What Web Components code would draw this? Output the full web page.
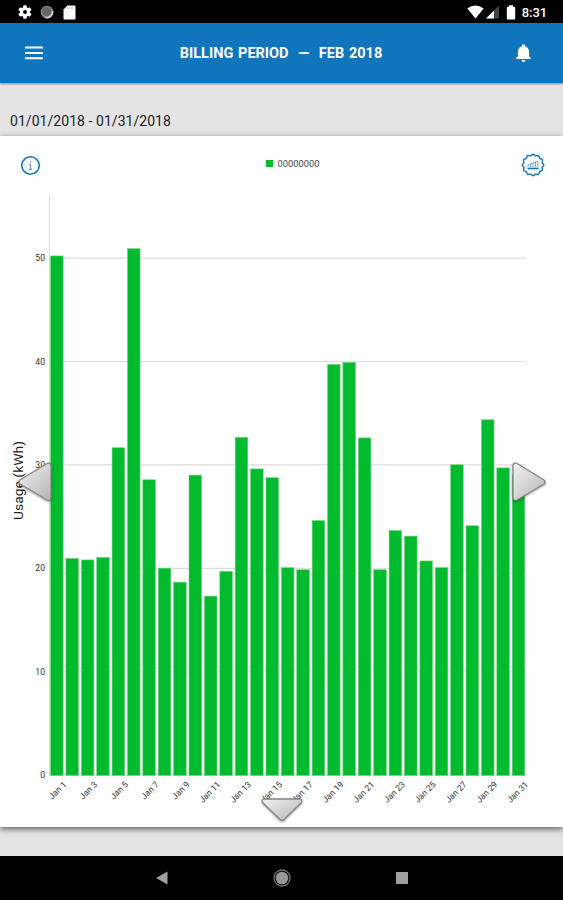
<!DOCTYPE html>
<html lang="en">
<head>
<meta charset="utf-8">
<title>Billing period</title>
<style>
    html, body {
        margin: 0;
        height: 100%;
    }

    body {
        --color-primary: #0f75bc;
        --color-bar: #00bb2d;
        font-family: Roboto, "Liberation Sans", sans-serif;
        background: #000;
        overflow: hidden;
    }
</style>
</head>
<body>
<usage-app></usage-app>

<script>
class BaseComponent extends HTMLElement {
    constructor() {
        super();
        this.template = document.createElement('template');
        this.template.innerHTML = this.getTemplate();
        this.attachShadow({mode: 'open'}).appendChild(this.template.content.cloneNode(true));
    }
}

class StatusBar extends BaseComponent {
    getTemplate() {
        return `
            <style>
                :host {
                    display: flex;
                    align-items: center;
                    justify-content: space-between;
                    box-sizing: border-box;
                    height: 23px;
                    padding: 1px 16px 0 17px;
                    background: #000;
                    color: #fff;
                }
                div { display: flex; align-items: center; }
                svg { display: block; }
                .left { gap: 7px; }
                .time { font-size: 13px; font-weight: 500; margin-left: 6px; letter-spacing: -.1px; }
            </style>
            <div class="left">
                <svg width="16" height="16" viewBox="0 0 24 24" fill="#fff"><path d="M19.4 13a7.500 7.500 0 0 0 0-2l2.100-1.600a.5.5 0 0 0 .1-.7l-2-3.400a.5.5 0 0 0-.6-.2l-2.500 1a7.300 7.300 0 0 0-1.700-1l-.4-2.600a.5.5 0 0 0-.5-.5h-4a.5.5 0 0 0-.5.5L9 5.100a7.700 7.700 0 0 0-1.700 1l-2.500-1a.5.5 0 0 0-.6.2l-2 3.400a.5.5 0 0 0 .1.700L4.500 11a7.900 7.900 0 0 0 0 2l-2.200 1.600a.5.5 0 0 0-.1.700l2 3.400a.5.5 0 0 0 .6.200l2.500-1a7.300 7.300 0 0 0 1.700 1l.4 2.600a.5.5 0 0 0 .5.500h4a.5.5 0 0 0 .5-.5l.4-2.600a7.700 7.700 0 0 0 1.700-1l2.500 1a.5.5 0 0 0 .6-.2l2-3.400a.5.5 0 0 0-.1-.7zM12 15a3 3 0 1 1 0-6 3 3 0 0 1 0 6z"/></svg>
                <svg width="14" height="14" viewBox="0 0 14 14"><circle cx="7" cy="7" r="6.300" fill="#888"/><circle cx="6.500" cy="6.400" r="4.600" fill="#666"/><path d="M12.500 6a5.600 5.600 0 0 1-7 6.400" fill="none" stroke="#ddd" stroke-width="1.500"/></svg>
                <svg style="margin-left:2px" width="13" height="15" viewBox="0 0 13 15"><path d="M4.500.5h7q1 0 1 1v12q0 1-1 1h-10q-1 0-1-1v-9z" fill="#fff"/><path d="M4.700 2v2M6.900 2v2M9.100 2v2" stroke="#bbb"/></svg>
            </div>
            <div>
                <svg width="17" height="14" viewBox="0 0 17 14"><path d="M.3 3.400Q8.500-2.200 16.700 3.400L8.500 13.500z" fill="#fff"/></svg>
                <svg style="margin-left:1px" width="15" height="14" viewBox="0 0 15 14"><path d="M1 13.500L14 .5v13z" fill="#444"/><path d="M1 13.500L9 5.500v8z" fill="#fff"/></svg>
                <svg style="margin-left:6px" width="10" height="15" viewBox="0 0 10 15"><path d="M3 .3h4v1.500h1.200q1 0 1 1v10.700q0 1-1 1H1.800q-1 0-1-1V2.800q0-1 1-1H3z" fill="#fff"/></svg>
                <span class="time">8:31</span>
            </div>
        `;
    }
}

class AppHeader extends BaseComponent {
    getTemplate() {
        return `
            <style>
                :host {
                    display: flex;
                    align-items: center;
                    justify-content: space-between;
                    box-sizing: border-box;
                    height: 60px;
                    padding: 0 32px 0 25px;
                    background: var(--color-primary);
                    color: #fff;
                    box-shadow: 0 1px 2px rgba(0, 0, 0, .4);
                    position: relative;
                }
                h1 {
                    margin: 1px 0 0 3px;
                    font-size: 14.500px;
                    font-weight: 700;
                    white-space: pre;
                    word-spacing: 1.200px;
                }
                svg { display: block; }
            </style>
            <svg width="18" height="14" viewBox="0 0 18 14"><path d="M0 1.600h18M0 6.900h18M0 12.200h18" stroke="#fff" stroke-width="2"/></svg>
            <h1><slot></slot></h1>
            <svg width="15" height="18" viewBox="0 0 16 19"><path d="M8 19a2 2 0 0 0 2-2H6a2 2 0 0 0 2 2zM14 13V8.300C14 5.400 12.200 3 9.500 2.300v-.6a1.500 1.500 0 0 0-3 0v.6C3.800 3 2 5.400 2 8.300V13L.3 14.800v1h15.400v-1z" fill="#fff"/></svg>
        `;
    }
}

class UsageChart extends BaseComponent {
    getTemplate() {
        const values = [
            50.25, 21, 20.85, 21.1, 31.7, 50.95, 28.6, 20.05, 18.7, 29.05, 17.35,
            19.75, 32.7, 29.65, 28.8, 20.1, 19.9, 24.65, 39.75, 39.95, 32.65,
            19.9, 23.7, 23.15, 20.75, 20.1, 30.05, 24.15, 34.4, 29.75, 29.1,
        ];
        const left = 49.3;
        const base = 587.5;
        const unit = 10.34;
        const step = 15.39;

        const grid = [0, 10, 20, 30, 40, 50].map((v) => {
            const y = base - 0.4 - v * unit;
            return `<path class="grid" d="M49 ${y}H526"/><text x="45" y="${y + 3}" text-anchor="end">${v}</text>`;
        }).join('');

        const bars = values.map((v, i) => `
            <rect x="${left + 1.2 + i * step}" y="${base - v * unit}" width="12.600" height="${v * unit}"/>`
        ).join('');

        const days = values.map((v, i) => {
            if (i % 2) {
                return '';
            }
            const x = left + 17.8 + i * step;
            return `<text transform="translate(${x} ${base + 9.5}) rotate(-45)" text-anchor="end">Jan ${i + 1}</text>`;
        }).join('');

        return `
            <style>
                :host { display: block; }
                svg { display: block; }
                rect { fill: var(--color-bar); stroke: #74d67c; stroke-width: .6; }
                text { font-size: 8.600px; fill: #333; }
                .grid { stroke: #dcdcdc; stroke-width: 1.200; }
                .title { font-size: 13.200px; fill: #222; }
            </style>
            <svg width="563" height="632" viewBox="0 0 563 632">
                <path class="grid" d="M49.500 8V588"/>
                ${grid}
                ${bars}
                ${days}
                <text class="title" transform="translate(22.500 332) rotate(-90)" textLength="79" lengthAdjust="spacingAndGlyphs">Usage (kWh)</text>
            </svg>
        `;
    }
}

class PagerArrow extends BaseComponent {
    getTemplate() {
        return `
            <style>
                :host { display: block; position: absolute; }
                :host([side="left"]) { left: 17px; top: 325px; }
                :host([side="right"]) { left: 511px; top: 325px; }
                :host([side="down"]) { left: 261px; top: 661px; }
                svg { display: none; filter: drop-shadow(0 1px 1px rgba(0, 0, 0, .35)); }
                :host([side="left"]) .left,
                :host([side="right"]) .right,
                :host([side="down"]) .down { display: block; }
                path { fill: url(#shade); stroke: #858585; stroke-width: 1.300; stroke-linejoin: round; }
            </style>
            <svg width="0" height="0" style="display:block;position:absolute">
                <linearGradient id="shade" x1="0" y1="0" x2="1" y2="1">
                    <stop offset="0" stop-color="#f2f2f2"/>
                    <stop offset="1" stop-color="#b4b4b4"/>
                </linearGradient>
            </svg>
            <svg class="left" width="36" height="42" viewBox="0 0 36 42"><path d="M2.500 21Q1.500 20 3 19L30 2.500Q34 1 34 5V36Q34 40.500 30 39L3 23Q1.500 22 2.500 21z"/></svg>
            <svg class="right" width="36" height="42" viewBox="0 0 36 42"><path d="M33.500 21Q34.500 20 33 19L6 2.500Q2 1 2 5V36Q2 40.500 6 39L33 23Q34.500 22 33.500 21z"/></svg>
            <svg class="down" width="42" height="27" viewBox="0 0 42 27"><path d="M2.500 2H39.500Q42 3 40 6L23 22.500Q21 24.500 19 22.500L2 6Q0 3 2.500 2z"/></svg>
        `;
    }
}

class ChartCard extends BaseComponent {
    getTemplate() {
        return `
            <style>
                :host {
                    display: block;
                    position: relative;
                    height: 691px;
                    background: #fff;
                    box-shadow: 0 2px 6px rgba(0, 0, 0, .6);
                }
                .tools {
                    display: flex;
                    align-items: center;
                    justify-content: space-between;
                    height: 52px;
                    padding: 6px 18px 0 20px;
                    box-sizing: border-box;
                }
                .legend {
                    display: flex;
                    align-items: center;
                    gap: 5px;
                    margin: 0 0 3px 23px;
                    font-size: 9.300px;
                    color: #444;
                }
                .legend i { width: 7px; height: 7px; background: var(--color-bar); }
                .tools svg { display: block; fill: none; stroke: var(--color-primary); }
            </style>
            <div class="tools">
                <svg width="21" height="21" viewBox="0 0 21 21">
                    <circle cx="10.500" cy="10.500" r="8.700" stroke-width="1.600"/>
                    <path d="M10.500 6v1.700M9 9.700h1.500v4.500M8.800 14.300h3.400" stroke-width="1.200" stroke="#6a9bd0"/>
                </svg>
                <div class="legend"><i></i><span><slot name="legend"></slot></span></div>
                <svg width="24" height="24" viewBox="-12 -12 24 24">
                    <path id="badge" stroke-width="1.400"/>
                    <path d="M-5.500 3.500H5.500" stroke-width="1.600"/>
                    <path d="M-5 2.300V0L4.800-3.800V2.300M-2.500 2.300V-1M0 2.300V-2M2.500 2.300V-3" stroke-width=".9" opacity=".65"/>
                </svg>
            </div>
            <slot></slot>
        `;
    }

    connectedCallback() {
        // scalloped outline of the badge, 12 lobes
        const points = [];
        for (let i = 0; i < 144; i++) {
            const a = i * Math.PI / 72;
            const r = 10.1 + 0.7 * Math.cos(a * 12);
            points.push(`${(r * Math.cos(a)).toFixed(2)} ${(r * Math.sin(a)).toFixed(2)}`);
        }
        this.shadowRoot.querySelector('#badge').setAttribute('d', `M${points.join('L')}z`);
    }
}

class NavBar extends BaseComponent {
    getTemplate() {
        return `
            <style>
                :host {
                    display: flex;
                    align-items: center;
                    justify-content: center;
                    gap: 101px;
                    height: 44px;
                    background: #000;
                    position: relative;
                }
                svg { display: block; }
            </style>
            <svg width="18" height="18" viewBox="0 0 18 18"><path d="M14.500 2.500v13L3 9z" fill="#a0a0a0"/></svg>
            <svg width="20" height="20" viewBox="0 0 20 20"><circle cx="10" cy="10" r="8" fill="none" stroke="#777" stroke-width="1.300"/><circle cx="10" cy="10" r="6.300" fill="#999"/></svg>
            <svg width="18" height="18" viewBox="0 0 18 18"><path d="M3 3h12v12H3z" fill="#a0a0a0"/></svg>
        `;
    }
}

class UsageApp extends BaseComponent {
    getTemplate() {
        return `
            <style>
                :host {
                    display: flex;
                    flex-direction: column;
                    width: 563px;
                    height: 900px;
                    background: #e4e4e4;
                }
                .range {
                    box-sizing: border-box;
                    height: 53px;
                    padding: 30px 10px 0;
                    font-size: 14px;
                    line-height: 17px;
                    letter-spacing: .05px;
                    color: #222;
                }
                nav-bar { margin-top: auto; }
            </style>
            <status-bar></status-bar>
            <app-header>BILLING PERIOD  —  FEB 2018</app-header>
            <div class="range">01/01/2018 - 01/31/2018</div>
            <chart-card>
                <span slot="legend">00000000</span>
                <usage-chart></usage-chart>
                <pager-arrow side="left"></pager-arrow>
                <pager-arrow side="right"></pager-arrow>
                <pager-arrow side="down"></pager-arrow>
            </chart-card>
            <nav-bar></nav-bar>
        `;
    }
}

window.customElements.define('status-bar', StatusBar);
window.customElements.define('app-header', AppHeader);
window.customElements.define('usage-chart', UsageChart);
window.customElements.define('pager-arrow', PagerArrow);
window.customElements.define('chart-card', ChartCard);
window.customElements.define('nav-bar', NavBar);
window.customElements.define('usage-app', UsageApp);
</script>
</body>
</html>
